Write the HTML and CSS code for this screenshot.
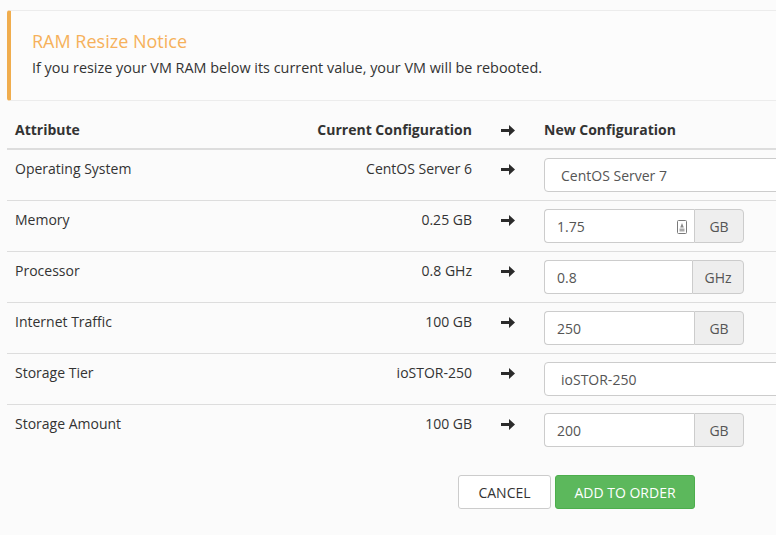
FILE: index.html
```html
<!DOCTYPE html>
<html lang="en">
<head>
<meta charset="utf-8">
<title>RAM Resize</title>
<link rel="stylesheet" href="styles.css">
</head>
<body>
<div class="page">
  <div class="notice">
    <h4 class="notice-title">RAM Resize Notice</h4>
    <p class="notice-text">If you resize your VM RAM below its current value, your VM will be rebooted.</p>
  </div>

  <table class="config">
    <thead>
      <tr>
        <th class="c-attr">Attribute</th>
        <th class="c-cur">Current Configuration</th>
        <th class="c-arrow"><svg class="arrow" viewBox="0 0 14 11"><path d="M0 4h8V0l6 5.5L8 11V7H0z"/></svg></th>
        <th class="c-new">New Configuration</th>
      </tr>
    </thead>
    <tbody>
      <tr>
        <td class="c-attr">Operating System</td>
        <td class="c-cur">CentOS Server 6</td>
        <td class="c-arrow"><svg class="arrow" viewBox="0 0 14 11"><path d="M0 4h8V0l6 5.5L8 11V7H0z"/></svg></td>
        <td class="c-new"><div class="select">CentOS Server 7</div></td>
      </tr>
      <tr>
        <td class="c-attr">Memory</td>
        <td class="c-cur">0.25 GB</td>
        <td class="c-arrow"><svg class="arrow" viewBox="0 0 14 11"><path d="M0 4h8V0l6 5.5L8 11V7H0z"/></svg></td>
        <td class="c-new">
          <div class="group">
            <div class="input has-icon">1.75
              <svg class="spin" viewBox="0 0 10 14"><rect x="0.5" y="0.5" width="9" height="13" rx="1" fill="#fff" stroke="#7a7a7a"/><path d="M5 3l1.8 4.5H3.2z" fill="#8a8a8a"/><rect x="2.5" y="8.5" width="5" height="3" fill="#aaa"/></svg>
            </div>
            <div class="addon">GB</div>
          </div>
        </td>
      </tr>
      <tr>
        <td class="c-attr">Processor</td>
        <td class="c-cur">0.8 GHz</td>
        <td class="c-arrow"><svg class="arrow" viewBox="0 0 14 11"><path d="M0 4h8V0l6 5.5L8 11V7H0z"/></svg></td>
        <td class="c-new">
          <div class="group">
            <div class="input">0.8</div>
            <div class="addon addon-wide">GHz</div>
          </div>
        </td>
      </tr>
      <tr>
        <td class="c-attr">Internet Traffic</td>
        <td class="c-cur">100 GB</td>
        <td class="c-arrow"><svg class="arrow" viewBox="0 0 14 11"><path d="M0 4h8V0l6 5.5L8 11V7H0z"/></svg></td>
        <td class="c-new">
          <div class="group">
            <div class="input">250</div>
            <div class="addon">GB</div>
          </div>
        </td>
      </tr>
      <tr>
        <td class="c-attr">Storage Tier</td>
        <td class="c-cur">ioSTOR-250</td>
        <td class="c-arrow"><svg class="arrow" viewBox="0 0 14 11"><path d="M0 4h8V0l6 5.5L8 11V7H0z"/></svg></td>
        <td class="c-new"><div class="select">ioSTOR-250</div></td>
      </tr>
      <tr>
        <td class="c-attr">Storage Amount</td>
        <td class="c-cur">100 GB</td>
        <td class="c-arrow"><svg class="arrow" viewBox="0 0 14 11"><path d="M0 4h8V0l6 5.5L8 11V7H0z"/></svg></td>
        <td class="c-new">
          <div class="group">
            <div class="input">200</div>
            <div class="addon">GB</div>
          </div>
        </td>
      </tr>
    </tbody>
  </table>

  <div class="actions">
    <button class="btn btn-default">CANCEL</button>
    <button class="btn btn-success">ADD TO ORDER</button>
  </div>
</div>
</body>
</html>
```

FILE: styles.css
```css
html, body {
  margin: 0;
  padding: 0;
  overflow: hidden;
  background: #fbfbfb;
}
body {
  font-family: "Open Sans", "Noto Sans", sans-serif;
  font-size: 14px;
  line-height: 20px;
  color: #333;
}
.page {
  width: 830px;
  padding: 10px 0 0 7px;
}
.notice {
  background: #fcfcfc;
  border-top: 1px solid #ececec;
  border-bottom: 1px solid #ececec;
  border-left: 4px solid #f0ad4e;
  border-radius: 3px 0 0 3px;
  padding: 19px 20px 18px 21px;
  height: 52px;
}
.notice-title {
  margin: 0 0 6px 0;
  font-size: 18px;
  font-weight: normal;
  line-height: 22px;
  color: #f6b15b;
}
.notice-text {
  margin: 0;
  font-size: 14.4px;
  line-height: 20px;
}
.config {
  width: 100%;
  border-collapse: collapse;
  margin-top: 10px;
}
.config th {
  text-align: left;
  font-weight: bold;
  padding: 9px 8px 8px 8px;
  border-bottom: 2px solid #ddd;
  vertical-align: bottom;
}
.config td {
  padding: 9px 8px 7px 8px;
  border-top: 1px solid #ddd;
  vertical-align: top;
  height: 34px;
}
.config td.c-new {
  padding: 8px;
}
.config tbody tr:first-child td {
  border-top: 0;
}
.c-attr { width: 251px; }
.config .c-cur { width: 190px; text-align: right; }
.config .c-arrow { width: 40px; text-align: center; }
.arrow {
  width: 14px;
  height: 11px;
  fill: #2b2b2b;
  vertical-align: -1px;
}
.select {
  box-sizing: border-box;
  height: 34px;
  padding: 7px 16px;
  background: #fff;
  border: 1px solid #ccc;
  border-radius: 4px;
  color: #555;
}
.group {
  display: flex;
  width: 200px;
  height: 34px;
}
.input {
  flex: 1;
  position: relative;
  box-sizing: border-box;
  padding: 7px 12px;
  background: #fff;
  border: 1px solid #ccc;
  border-right: 0;
  border-radius: 4px 0 0 4px;
  color: #555;
}
.spin {
  position: absolute;
  right: 7px;
  top: 10px;
  width: 10px;
  height: 14px;
}
.addon {
  box-sizing: border-box;
  width: 50px;
  padding: 7px 0;
  text-align: center;
  background: #eee;
  border: 1px solid #ccc;
  border-radius: 0 4px 4px 0;
  color: #555;
}
.addon-wide { width: 52px; }
.actions {
  display: flex;
  gap: 4px;
  padding: 20px 0 0 451px;
}
.btn {
  font-family: "Open Sans", "Noto Sans", sans-serif;
  font-size: 14px;
  height: 34px;
  padding: 0;
  border-radius: 3px;
  white-space: nowrap;
  text-align: center;
  cursor: pointer;
}
.btn-default {
  width: 93px;
  background: #fff;
  border: 1px solid #ccc;
  color: #333;
}
.btn-success {
  width: 140px;
  background: #5cb85c;
  border: 1px solid #4cae4c;
  color: #fff;
}
```
